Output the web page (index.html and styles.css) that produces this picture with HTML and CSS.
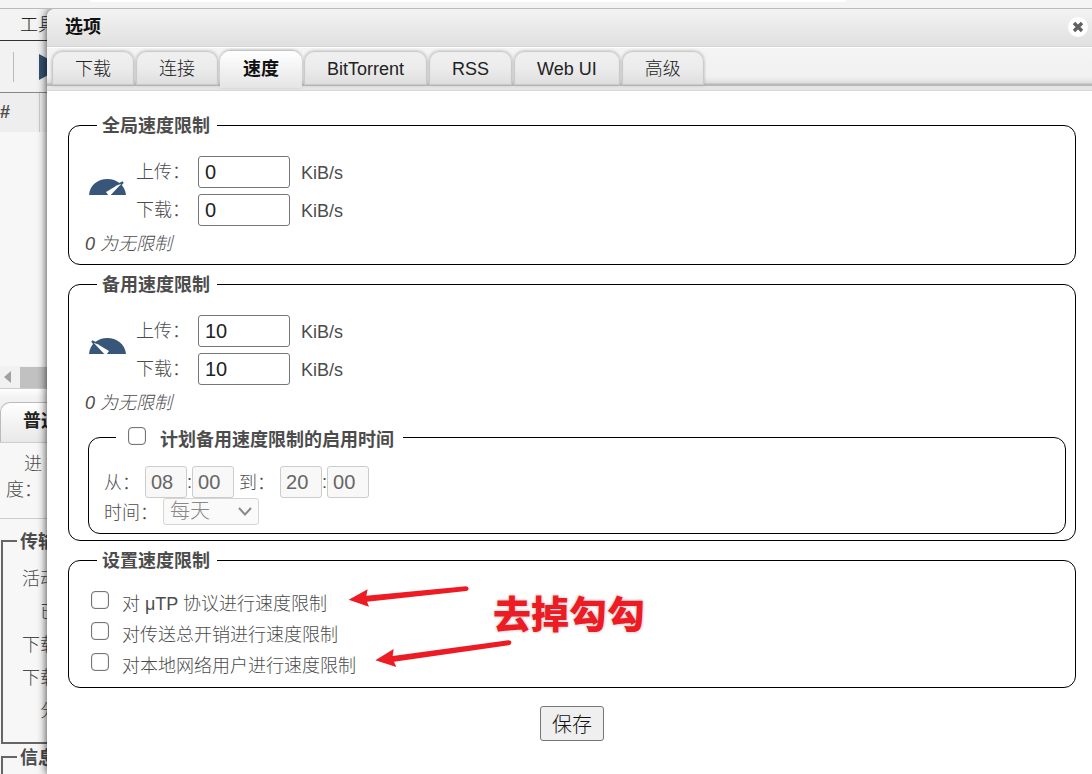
FILE: index.html
```html
<!DOCTYPE html>
<html lang="zh-CN">
  <head>
    <meta charset="utf-8">
    <title>选项</title>
    <meta name="viewport" content="width=device-width, initial-scale=1">
    <link rel="stylesheet" href="styles.css">
  </head>

  <body>
    <div class="desktop">
        <div class="addressBar"><div class="addressBox"></div></div>
        <div class="menuBar"><a href="#tools">工具</a></div>
        <div class="toolBar">
            <span class="separator"></span>
            <svg class="play" viewBox="0 0 24 26" aria-hidden="true"><path d="M0 0L24 13L0 26Z" fill="#34506f"/></svg>
        </div>
        <div class="transferHead"><span>#</span></div>
        <div class="transferList"></div>
        <div class="scrollBar">
            <svg class="scrollArrow" viewBox="0 0 7 12" aria-hidden="true"><path d="M7 0V12L0 6Z" fill="#a0a0a0"/></svg>
            <div class="scrollThumb"></div>
        </div>
        <div class="panelTabs"><a href="#general">普通</a></div>
        <div class="progress"><span>进度：</span></div>
        <div class="panel">
            <fieldset>
                <legend>传输</legend>
                <ul>
                    <li>活动时间：</li>
                    <li>已下载：</li>
                    <li>下载速度：</li>
                    <li>下载限制：</li>
                    <li>分享率：</li>
                </ul>
            </fieldset>
            <fieldset>
                <legend>信息</legend>
            </fieldset>
        </div>
    </div>

    <div class="dialog" role="dialog" aria-labelledby="dialogTitle">
        <div class="titleBar">
            <h3 id="dialogTitle">选项</h3>
            <button type="button" class="close" aria-label="关闭">
                <svg viewBox="0 0 20 20" aria-hidden="true">
                    <circle cx="10" cy="10" r="10" fill="#fff"/>
                    <path d="M6 6L14 14M14 6L6 14" stroke="#606060" stroke-width="3.4"/>
                </svg>
            </button>
        </div>

        <nav class="tabs">
            <a href="#downloads">下载</a>
            <a href="#connection">连接</a>
            <a href="#speed" class="selected">速度</a>
            <a href="#bittorrent">BitTorrent</a>
            <a href="#rss">RSS</a>
            <a href="#webui">Web UI</a>
            <a href="#advanced">高级</a>
        </nav>

        <form class="content">
            <fieldset class="settings">
                <legend>全局速度限制</legend>
                <div class="rates">
                    <svg class="gauge" viewBox="267 207 117 72" aria-hidden="true">
                        <path d="M267 255C269 225 294 207 322 207C350 207 375 225 378 255Z" fill="#38557a"/>
                        <path d="M351 222L368 214L371 219L358 233Z" fill="#38557a"/>
                        <path d="M318 246L352 226L364 221L357 229L335 252L327 259Z" fill="#fff"/>
                    </svg>
                    <label for="upLimit">上传：</label>
                    <input type="text" id="upLimit" value="0">
                    <span class="unit">KiB/s</span>
                    <label for="dlLimit">下载：</label>
                    <input type="text" id="dlLimit" value="0">
                    <span class="unit">KiB/s</span>
                </div>
                <p class="note">0 为无限制</p>
            </fieldset>

            <fieldset class="settings">
                <legend>备用速度限制</legend>
                <div class="rates">
                    <svg class="gauge" viewBox="267 207 117 72" aria-hidden="true">
                        <path d="M267 255C269 225 294 207 322 207C350 207 375 225 378 255Z" fill="#38557a"/>
                        <path d="M294 222L277 214L274 219L287 233Z" fill="#38557a"/>
                        <path d="M327 246L293 226L281 221L288 229L310 252L318 259Z" fill="#fff"/>
                    </svg>
                    <label for="altUpLimit">上传：</label>
                    <input type="text" id="altUpLimit" value="10">
                    <span class="unit">KiB/s</span>
                    <label for="altDlLimit">下载：</label>
                    <input type="text" id="altDlLimit" value="10">
                    <span class="unit">KiB/s</span>
                </div>
                <p class="note">0 为无限制</p>

                <fieldset class="settings schedule">
                    <legend>
                        <input type="checkbox" id="scheduling">
                        <label for="scheduling">计划备用速度限制的启用时间</label>
                    </legend>
                    <div class="times">
                        <label for="fromHour">从：</label>
                        <div class="clock">
                            <input type="text" id="fromHour" value="08" disabled>:<input type="text" aria-label="分" value="00" disabled>
                        </div>
                        <label for="toHour">到：</label>
                        <div class="clock">
                            <input type="text" id="toHour" value="20" disabled>:<input type="text" aria-label="分" value="00" disabled>
                        </div>
                    </div>
                    <div class="times">
                        <label for="days">时间：</label>
                        <div class="select">
                            <select id="days" disabled>
                                <option>每天</option>
                            </select>
                            <svg viewBox="0 0 14 9" aria-hidden="true"><path d="M1 1L7 7.500L13 1" fill="none" stroke="#8a8a8a" stroke-width="2"/></svg>
                        </div>
                    </div>
                </fieldset>
            </fieldset>

            <fieldset class="settings limits">
                <legend>设置速度限制</legend>
                <div class="checks">
                    <div class="check">
                        <input type="checkbox" id="limitUtp">
                        <label for="limitUtp">对 μTP 协议进行速度限制</label>
                    </div>
                    <div class="check">
                        <input type="checkbox" id="limitOverhead">
                        <label for="limitOverhead">对传送总开销进行速度限制</label>
                    </div>
                    <div class="check">
                        <input type="checkbox" id="limitLan">
                        <label for="limitLan">对本地网络用户进行速度限制</label>
                    </div>
                    <svg class="arrows" viewBox="0 0 540 300" aria-hidden="true" fill="#ed1c24">
                        <path d="M26 89L83 58L79 77L378 49Q386 50 386 56Q386 62 379 63L81 95L87 110Z"/>
                        <path d="M106 271L161 237L158 258L505 211Q514 211 514 218Q513 225 506 226L162 275L169 291Z"/>
                    </svg>
                    <p class="callout">去掉勾勾</p>
                </div>
            </fieldset>

            <button type="button" class="save">保存</button>
        </form>
    </div>
  </body>
</html>
```
FILE: styles.css
```css
* { box-sizing: border-box; }
body { margin: 0; overflow: hidden; background-color: #f7f7f7; color: #4c4c4c; font-family: "Liberation Sans", "Noto Sans CJK SC", sans-serif; font-size: 18px; font-weight: 300; line-height: 26px; }
a { color: #222; text-decoration: none; }
p, h3, ul { margin: 0; padding: 0; }
ul { list-style: none; }
fieldset { margin: 0; min-width: 0; }
legend { font-weight: bold; line-height: 24px; }

/* main window */
.desktop { height: 100vh; overflow: hidden; }
.addressBar { height: 9px; padding: 0 246px 0 90px; background-color: #f4f4f4; border-bottom: 1px solid #bbb; }
.addressBox { height: 2px; background-color: #fff; border-radius: 0 0 4px 4px; }
.menuBar { height: 32px; padding: 3px 20px; background-color: #f3f3f3; border-bottom: 1px solid #333; }
.toolBar { display: flex; align-items: center; gap: 25px; height: 52px; padding-left: 13px; background-color: #f2f2f2; border-bottom: 1px solid #888; }
.separator { width: 1px; height: 30px; background-color: #bbb; }
.play { width: 24px; height: 26px; }
.transferHead { height: 39px; background-color: #eee; font-weight: bold; line-height: 38px; }
.transferHead span { display: block; width: 40px; height: 39px; border-right: 1px solid #ccc; }
.transferList { height: 234px; }
.scrollBar { display: flex; align-items: center; gap: 9px; height: 22px; padding-left: 4px; background-color: #f1f1f1; }
.scrollArrow { width: 7px; height: 12px; }
.scrollThumb { flex: 1; height: 21px; background-color: #c1c1c1; }
.panelTabs { height: 55px; padding-top: 13px; border-top: 1px solid #ccc; border-bottom: 1px solid #ccc; background: linear-gradient(#fff 0, #f3f3f3 8px, #e4e4e4); }
.panelTabs a { display: block; width: 83px; height: 40px; padding-left: 22px; border: 2px solid #bbb; border-width: 1px 1px 0; border-radius: 10px 10px 0 0; background: linear-gradient(#fff, #e8e8e8); font-weight: bold; line-height: 36px; }
.progress { height: 76px; padding: 8px 6px; border-bottom: 1px solid #ccc; }
.progress span { display: block; width: 36px; text-align: right; }
.panel { padding: 9px 8px 0 1px; }
.panel fieldset { padding: 9px 14px 14px; border: 2px solid #666; }
.panel legend { margin: 0; padding: 2px 3px 0; }
.panel ul { width: 95px; text-align: right; line-height: 33px; }

/* options dialog */
.dialog { position: absolute; top: 9px; right: 0; bottom: 0; left: 47px; background-color: #fff; border-radius: 8px 0 0 0; box-shadow: 0 0 10px rgba(0, 0, 0, 0.8); clip-path: inset(0 0 0 -20px); }
.titleBar { display: flex; align-items: center; justify-content: space-between; height: 38px; padding: 0 4px 2px 18px; background: linear-gradient(#f3f3f3, #e0e0e0); border-bottom: 1px solid #d5d5d5; border-radius: 8px 0 0 0; }
.titleBar h3 { color: #111; font-size: 18px; }
.close { width: 20px; height: 20px; padding: 0; border: none; background: none; cursor: pointer; }
.close svg { display: block; }
.tabs { display: flex; gap: 2px; height: 45px; padding: 4px 5px 0; background: linear-gradient(#fff 0, #fff 1px, #f4f4f4 1px, #f1f1f1 30px, #ddd 36px, #b8b8b8 37px, #b8b8b8 39px, #e5e5e5 39px, #e5e5e5 43px, #d8d8d8 43px, #d8d8d8 44px, #fff 44px); }
.tabs a { height: 34px; padding: 0 23px; border-radius: 10px 10px 0 0; background: linear-gradient(#f0f0f0, #ececec 50%, #dedede); box-shadow: inset 0 0 1px 1px #c8c8c8, 0 0 3px #aaa; line-height: 36px; }
.tabs a.selected { height: 37px; background: linear-gradient(#fff, #e5e5e5); box-shadow: 0 -1px 3px #aaa; color: #111; font-weight: bold; }
.content { padding: 20px 16px 0 21px; text-align: center; }

.settings { margin-bottom: 6px; padding: 18px 8px 6px 16px; border: 1px solid #000; border-radius: 12px; text-align: left; }
.settings legend { margin-left: 12px; padding: 2px 7px 0 5px; }
.rates { display: grid; grid-template-columns: 43px 54px 92px auto; justify-content: start; align-items: center; gap: 6px 8px; }
.gauge { grid-row: span 2; width: 39px; height: 24px; margin-left: 4px; }
.unit { padding: 1px 0 0 3px; }
.note { padding: 5px 0 1px; font-style: italic; }
input[type="text"] { width: 100%; height: 32px; padding: 0 6px; border: 1px solid #767676; border-radius: 3px; background-color: #fff; color: #222; font-family: inherit; font-size: 20px; }
input[type="checkbox"] { appearance: none; width: 18px; height: 18px; margin: 0; border: 1px solid #767676; border-radius: 4px; background-color: #fff; box-shadow: inset 0 0 1px #767676; }
input[type="checkbox"]:checked { background-color: #0075ff; }

.schedule { margin: 7px 1px 0 3px; padding: 16px 15px 8px; }
.schedule legend { display: flex; gap: 14px; height: 26px; padding: 3px 9px 0 12px; line-height: 26px; }
.times { display: flex; align-items: center; gap: 5px; }
.times label { padding-top: 2px; }
.clock { display: flex; align-items: center; }
.clock input[type="text"] { width: 42px; padding: 0 5px; border-color: #ccc; background-color: #f8f8f8; color: #666; }
.select { display: grid; align-items: center; }
.select select, .select svg { grid-area: 1 / 1; }
.select select { appearance: none; width: 96px; height: 27px; padding: 0 6px; border: 1px solid #d5d5d5; border-radius: 3px; background-color: #fafafa; color: #888; font-family: inherit; font-size: 20px; font-weight: 300; line-height: 25px; opacity: 1; }
.times + .times { height: 27px; }
.select svg { justify-self: end; width: 14px; height: 9px; margin-right: 7px; pointer-events: none; }

.limits { padding: 16px 8px 5px 16px; }
.checks { position: relative; }
.check { display: flex; align-items: flex-start; gap: 13px; padding-left: 6px; line-height: 31px; }
.check input[type="checkbox"] { margin-top: 2px; }
.arrows { position: absolute; top: -19px; left: 255px; width: 180px; height: 100px; }
.callout { position: absolute; top: 0; left: 408px; color: #ed1c24; font-size: 38px; font-weight: 900; line-height: 52px; text-shadow: 0 0 2px #fff, 0 0 3px #999; white-space: nowrap; }

.save { height: 35px; margin-top: 12px; padding: 0 11px; border: 1px solid #767676; border-radius: 3px; background-color: #efefef; color: #111; font-family: inherit; font-size: 20px; font-weight: 300; cursor: pointer; }
```
